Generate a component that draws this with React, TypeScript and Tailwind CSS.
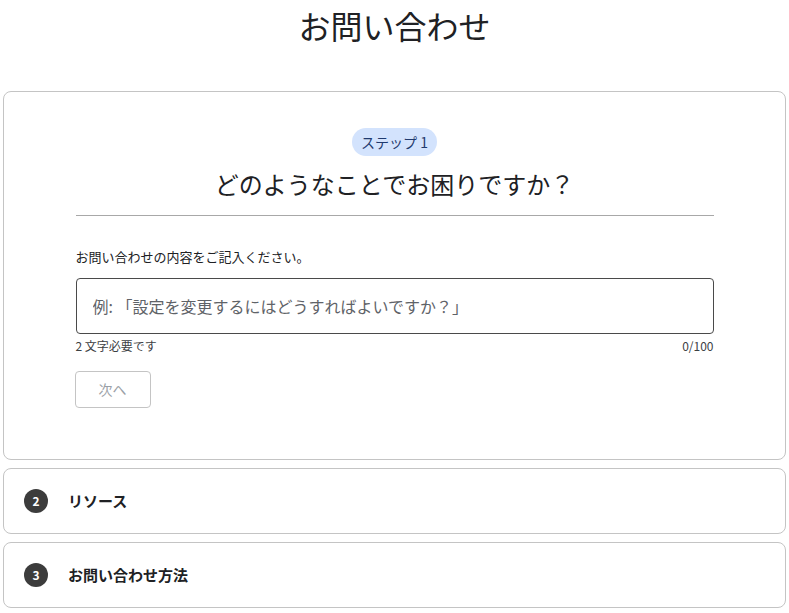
import { useState } from "react";

const FONT = { fontFamily: '"Noto Sans CJK JP", "Noto Sans", sans-serif' };

function StepRow({ num, label }: { num: number; label: string }) {
  return (
    <div className="mx-[3px] mt-[8px] flex h-[66px] items-center rounded-lg border border-[#c4c4c4] bg-white pl-[20px]">
      <span className="flex h-[24px] w-[24px] items-center justify-center rounded-full bg-[#3c3c3c] text-[12px] font-bold text-white">
        {num}
      </span>
      <span className="ml-[20px] text-[15px] font-bold text-[#202124]">{label}</span>
    </div>
  );
}

export default function App() {
  const [text, setText] = useState("");

  return (
    <div className="min-h-screen bg-white text-[#202124]" style={FONT}>
      <h1 className="pt-[3px] text-center text-[32px] leading-[44px] text-[#202124]">お問い合わせ</h1>

      {/* Step 1 */}
      <div className="mx-[3px] mt-[44px] h-[369px] rounded-lg border border-[#c4c4c4] bg-white">
        <div className="mx-auto w-[638px] pt-[36px]">
          <div className="flex justify-center">
            <span className="rounded-full bg-[#d3e3fd] px-[9px] py-[3px] text-[14px] leading-[22px] text-[#1f3a6e]">ステップ 1</span>
          </div>
          <h2 className="mt-[11px] text-center text-[24px] leading-[34px] text-[#202124]">どのようなことでお困りですか？</h2>
          <div className="mt-[14px] border-t border-[#a8a8a8]" />

          <p className="mt-[32px] text-[13px] leading-[18px] text-[#202124]">お問い合わせの内容をご記入ください。</p>
          <input
            value={text}
            onChange={(e) => setText(e.target.value)}
            placeholder="例: 「設定を変更するにはどうすればよいですか？」"
            className="mt-[12px] h-[56px] w-full rounded-[4px] border border-[#4a4a4a] px-[16px] text-[16px] text-[#202124] placeholder:text-[#5f6368] outline-none"
          />
          <div className="mt-[4px] flex justify-between text-[12px] leading-[16px] text-[#3c4043]">
            <span>2 文字必要です</span>
            <span>{text.length}/100</span>
          </div>
          <button
            disabled
            className="mt-[17px] ml-[-1px] h-[37px] w-[76px] rounded-[4px] border border-[#c4c4c4] text-[14px] text-[#9aa0a6]"
          >
            次へ
          </button>
        </div>
      </div>

      <StepRow num={2} label="リソース" />
      <StepRow num={3} label="お問い合わせ方法" />
    </div>
  );
}
